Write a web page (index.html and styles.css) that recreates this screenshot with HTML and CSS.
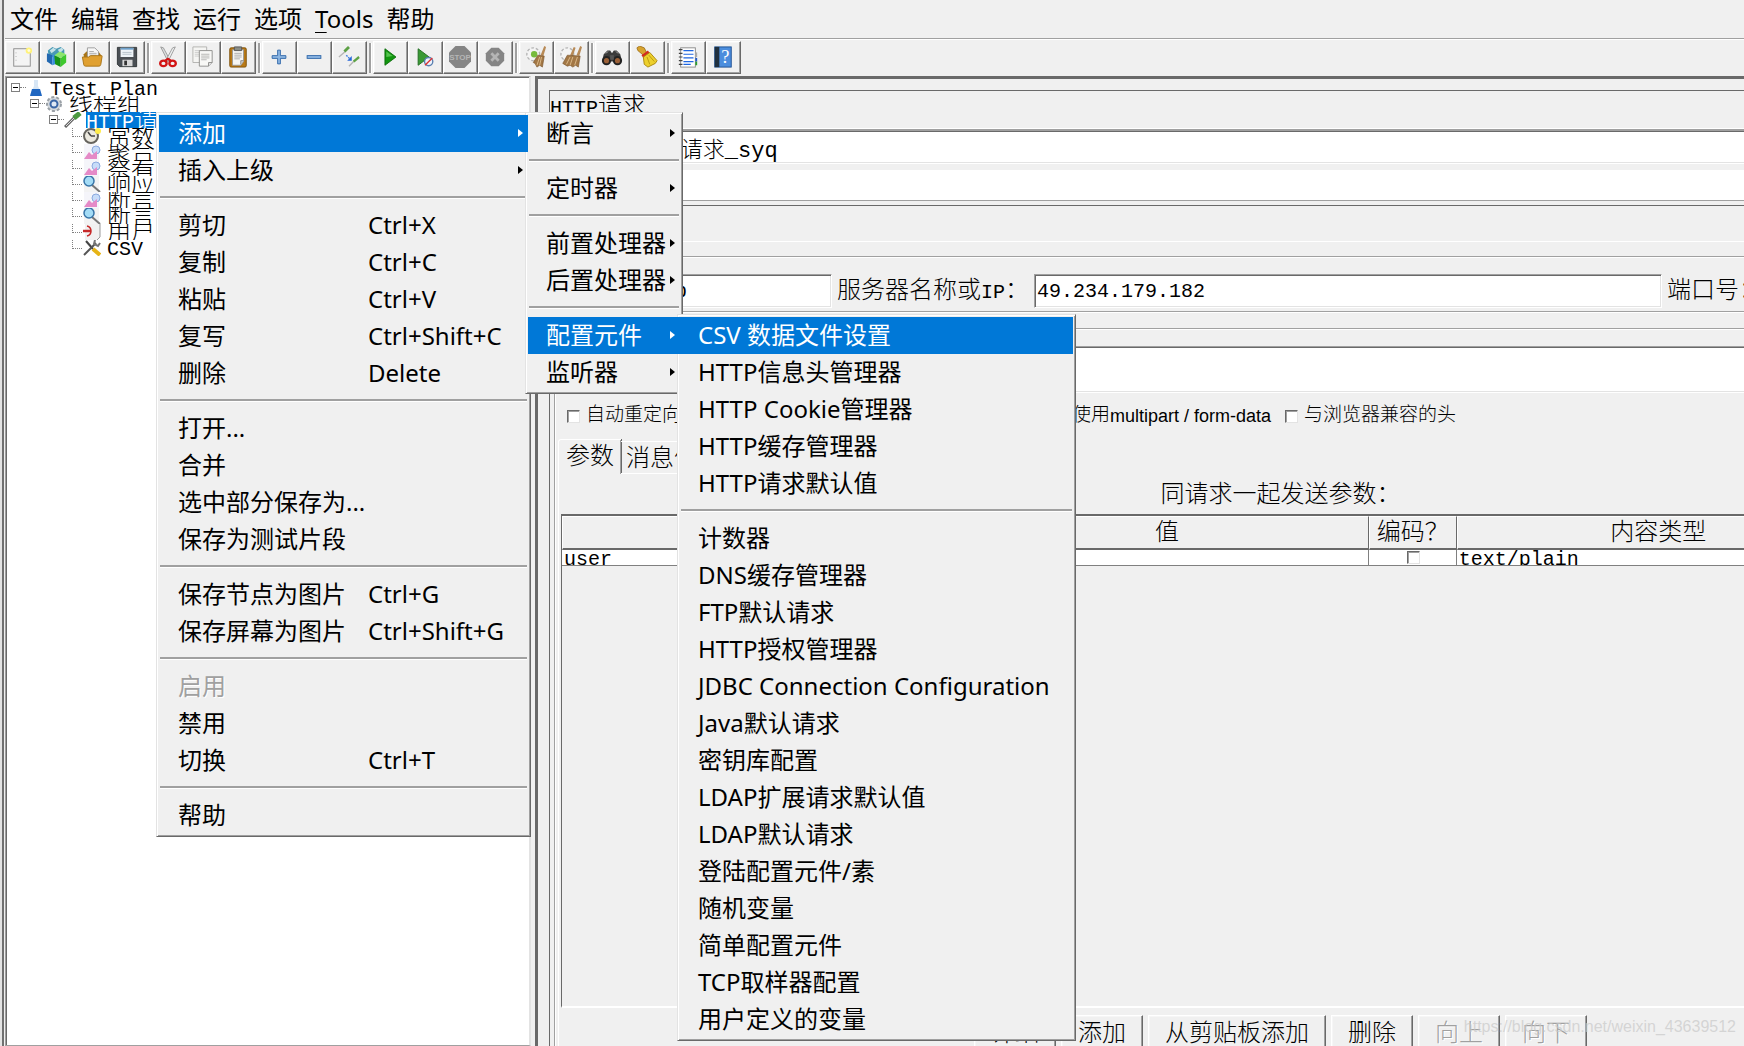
FILE: index.html
```html
<!DOCTYPE html>
<html lang="zh-CN">
<head>
<meta charset="utf-8">
<title>Test Plan</title>
<link rel="stylesheet" href="styles.css">
</head>
<body>
<div class="app">
  <nav class="menubar">
    <button type="button">文件</button>
    <button type="button">编辑</button>
    <button type="button">查找</button>
    <button type="button">运行</button>
    <button type="button">选项</button>
    <button type="button"><u>T</u>ools</button>
    <button type="button">帮助</button>
  </nav>

  <div class="toolbar">
    <div class="group">
      <button type="button" aria-label="新建"><svg viewBox="0 0 24 24"><rect x="3" y="3" width="18" height="19" fill="#f4f4f4" stroke="#8a8a8a"/><path d="M5.500 7v12" stroke="#aaa" stroke-dasharray="1 3"/><circle cx="19.500" cy="5" r="3.500" fill="#fff27a"/><circle cx="19.500" cy="5" r="1.500" fill="#fffde0"/></svg></button>
      <button type="button" aria-label="模板"><svg viewBox="0 0 24 24"><path d="M2 5l5-4 4 2 5-2 4 3v8H3z" fill="#4a9ab5"/><path d="M4 5l4-3 3 2-5 4zm9-1l4-2 2 2-4 4z" fill="#c5e2e8"/><path d="M1 8l6 2v11l-6-4z" fill="#2268b0"/><path d="M7 10l5-2v11l-5 2z" fill="#3a8ee0"/><path d="M9 10l7 3v10l-6-3z" fill="#179317"/><path d="M16 13l6-4v9l-6 5z" fill="#3fc82e"/><path d="M9 10l6-4 7 3-6 4z" fill="#8be56c"/></svg></button>
      <button type="button" aria-label="打开"><svg viewBox="0 0 24 24"><path d="M3 9l3-3h13l3 4v9H3z" fill="#a87417"/><path d="M7 2h8l4 4v9H7z" fill="#f7f7f7" stroke="#999"/><path d="M9 6h5M9 8h8M9 10h8" stroke="#aaa"/><path d="M1.500 12h7l2-1.500h12q.8 0 .5 1l-1.500 9q-.3 1.500-2 1.500H5q-1.700 0-2-1.500z" fill="#e0a030" stroke="#a87417"/></svg></button>
      <button type="button" aria-label="保存"><svg viewBox="0 0 24 24"><path d="M1.500 1.500h21v21H4l-2.500-2.500z" fill="#4a4f54" stroke="#2f3336"/><rect x="5" y="2" width="14" height="10" fill="#eef4f8"/><rect x="5" y="2" width="14" height="2" fill="#6d9fc9"/><path d="M7 7h10M7 9h10" stroke="#b5c1c9"/><rect x="7" y="15" width="11" height="7" fill="#d8d8d8"/><rect x="9" y="16" width="3" height="5" fill="#333"/></svg></button>
    </div>
    <div class="group">
      <button type="button" aria-label="剪切"><svg viewBox="0 0 24 24"><path d="M4 1l3 1 7 13-2 2z" fill="#d9dcdc" stroke="#888" stroke-width=".8"/><path d="M20 1l-3 1-7 13 2 2z" fill="#eceeee" stroke="#888" stroke-width=".8"/><ellipse cx="7" cy="19" rx="3.500" ry="3" fill="none" stroke="#d21414" stroke-width="2.600"/><ellipse cx="17" cy="19" rx="3.500" ry="3" fill="none" stroke="#d21414" stroke-width="2.600"/><path d="M9 16l3-2 3 2" stroke="#d21414" stroke-width="2.400" fill="none"/></svg></button>
      <button type="button" aria-label="复制"><svg viewBox="0 0 24 24"><path d="M1 1h15v17H1z" fill="#f5f5f3" stroke="#b0b0ae"/><path d="M3 5h5M3 7h5M3 9h5M3 11h5" stroke="#ccc"/><path d="M8 5h14v13l-4 4H8z" fill="#f8f8f6" stroke="#8c8c8a"/><path d="M10 9h9M10 11h9M10 13h9M10 15h6" stroke="#b4b4b2"/><path d="M22 18h-4v4" fill="#ddd" stroke="#8c8c8a"/></svg></button>
      <button type="button" aria-label="粘贴"><svg viewBox="0 0 24 24"><rect x="3" y="2" width="18" height="21" rx="1.500" fill="#b97a17" stroke="#7d4f08"/><path d="M6 4h12v13l-3 4H6z" fill="#f6f6f4" stroke="#999"/><path d="M8 1h8v4H8z" fill="#8a8d86" stroke="#555"/><path d="M8 8h8M8 10h8M8 12h8M8 14h6" stroke="#aaa"/><path d="M18 16h-3v4" fill="#ccc" stroke="#888"/></svg></button>
    </div>
    <div class="group">
      <button type="button" aria-label="展开"><svg viewBox="0 0 24 24"><path d="M10.500 4.500h3v6h6v3h-6v6h-3v-6h-6v-3h6z" fill="#8db7e3" stroke="#2e66a8"/></svg></button>
      <button type="button" aria-label="折叠"><svg viewBox="0 0 24 24"><rect x="4.500" y="10.500" width="15" height="3" fill="#8db7e3" stroke="#2e66a8"/></svg></button>
      <button type="button" aria-label="切换"><svg viewBox="0 0 24 24"><path d="M1 12l7-6" stroke="#b5b5b5" stroke-width="1.500"/><path d="M7 6l5-5" stroke="#5da145" stroke-width="3"/><path d="M12 22l5-5" stroke="#b5b5b5" stroke-width="1.500"/><path d="M17 17l6-5" stroke="#5da145" stroke-width="2.500"/><path d="M9 10l4 4" stroke="#3f7de0" stroke-width="1.500" stroke-dasharray="2 1"/><path d="M15 11v5h-5z" fill="#2465d8"/></svg></button>
    </div>
    <div class="group">
      <button type="button" aria-label="启动"><svg viewBox="0 0 24 24"><path d="M6.500 3l12 9-12 9z" fill="#12970f" stroke="#0b6b0b"/><path d="M8 6l7 5-7 1z" fill="#54c44e"/></svg></button>
      <button type="button" aria-label="无停顿启动"><svg viewBox="0 0 24 24"><path d="M4.500 3l12 9-12 9z" fill="#3a9a35" stroke="#226b22"/><circle cx="16" cy="17" r="4.500" fill="#eef3fb" stroke="#5a7fb0" stroke-width="1.500"/><path d="M12 21l8-8" stroke="#d33" stroke-width="1.500"/></svg></button>
      <button type="button" aria-label="停止" disabled><svg class="wide" viewBox="0 0 24 24"><path d="M7.500 1h9L23 7.500v9L16.500 23h-9L1 16.500v-9z" fill="#858585"/><text x="12" y="15" text-anchor="middle" class="stop">STOP</text></svg></button>
      <button type="button" aria-label="关闭" disabled><svg viewBox="0 0 24 24"><path d="M8 2h8l6 6v8l-6 6H8l-6-6V8z" fill="#858585"/><path d="M8 8l8 8M16 8l-8 8" stroke="#b5b5b5" stroke-width="3"/></svg></button>
    </div>
    <div class="group">
      <button type="button" aria-label="清除"><svg viewBox="0 0 24 24"><circle cx="9" cy="9" r="7" fill="#f4f4f4" stroke="#b5b5b5" stroke-width="1.500" stroke-dasharray="3 2"/><circle cx="10" cy="9" r="3.500" fill="#77bb3b"/><path d="M21 0l2 1-3 10-3-1z" fill="#b88a56"/><path d="M14 10l7 1-2 12-3-2-3 2-2-4-2-1z" fill="#a27745" stroke="#7a552c" stroke-width=".7"/><path d="M16 12l-3 9M18 12l-2 9" stroke="#dfbd8d"/></svg></button>
      <button type="button" aria-label="清除全部"><svg viewBox="0 0 24 24"><circle cx="8" cy="9" r="7" fill="#f4f4f4" stroke="#b5b5b5" stroke-width="1.500" stroke-dasharray="3 2"/><path d="M15 1l2 1-3 9-3-1zM22 0l2 1-3 10-3-1z" fill="#b88a56"/><path d="M8 10l14 1-2 12-3-2-3 2-3-2-3 1-5-3z" fill="#a27745" stroke="#7a552c" stroke-width=".7"/><path d="M11 12l-4 8M14 12l-3 9M19 12l-3 9" stroke="#dfbd8d"/></svg></button>
    </div>
    <div class="group">
      <button type="button" aria-label="查找"><svg viewBox="0 0 24 24"><path d="M3 9l4-4h3l2 3 2-3h3l4 4 2 8H1z" fill="#3b3b3b"/><path d="M5 8l3-2M19 8l-3-2" stroke="#999"/><circle cx="6" cy="16" r="5" fill="#222"/><circle cx="18" cy="16" r="5" fill="#222"/><circle cx="6" cy="16" r="2.800" fill="#9c6138"/><circle cx="18" cy="16" r="2.800" fill="#9c6138"/><rect x="10" y="10" width="4" height="5" fill="#555"/></svg></button>
      <button type="button" aria-label="重置查找"><svg viewBox="0 0 24 24"><path d="M1 2l3-2 5 2 3 6-4 2-6-5z" fill="#d7a32f" stroke="#94650f" stroke-width=".8"/><path d="M6 10l7-5 2 3-7 5z" fill="#d52b1e"/><path d="M8 12l7-5 8 9-2 3-8 4-4-3z" fill="#edd02c" stroke="#a8860b"/><path d="M12 12l3 8M14 10l6 7" stroke="#b9990f"/></svg></button>
    </div>
    <div class="group">
      <button type="button" aria-label="函数助手"><svg viewBox="0 0 24 24"><rect x="4" y="2" width="16" height="21" fill="#fff" stroke="#888"/><path d="M7 5h11M7 9h11M7 13h11M7 17h11M7 20h8" stroke="#1f66e0" stroke-width="1.300"/><path d="M2 4h4M2 8h4M2 12h4M2 16h4M2 20h4" stroke="#444" stroke-width="1.300"/><path d="M21 7v5" stroke="#aaa" stroke-width="2"/><path d="M21 13v4" stroke="#1e59c9" stroke-width="2"/><path d="M21 17v4" stroke="#2c9c2c" stroke-width="2"/></svg></button>
      <button type="button" aria-label="帮助"><svg viewBox="0 0 24 24"><rect x="3" y="1" width="18" height="22" fill="#4b8ddd" stroke="#1d4f91"/><rect x="3" y="1" width="5" height="22" fill="#20303f"/><text x="14.500" y="19" text-anchor="middle" class="mark">?</text></svg></button>
    </div>
  </div>

  <div class="body">
    <aside class="tree">
      <ul>
        <li class="lv0"><button type="button" class="fold" aria-label="折叠"></button><svg viewBox="0 0 12 16"><path d="M4 0h4v6l4 9H0l4-9z" fill="#d7e6f5"/><path d="M2 9h8l2 7H0z" fill="#1f66c1"/></svg><span class="latin">Test Plan</span></li>
        <li class="lv1"><button type="button" class="fold" aria-label="折叠"></button><svg viewBox="0 0 18 16"><circle cx="9" cy="8" r="7" fill="#d5d9dd" stroke="#9aa0a6" stroke-width="2" stroke-dasharray="3 2"/><circle cx="9" cy="8" r="3.500" fill="#dfe8f4" stroke="#3a65a5" stroke-width="2"/></svg><span>线程组</span></li>
        <li class="lv2"><button type="button" class="fold" aria-label="折叠"></button><svg viewBox="0 0 18 16"><path d="M1 15L11 5" stroke="#666" stroke-width="3"/><path d="M2 14l8-8" stroke="#ddd"/><path d="M10 6l6-5" stroke="#4d9a40" stroke-width="5"/></svg><span class="selected"><b class="latin">HTTP</b>请求_</span></li>
        <li class="lv3"><svg viewBox="0 0 18 16"><circle cx="8" cy="8" r="7" fill="#ece9df" stroke="#66645e" stroke-width="2"/><path d="M8 8L5 4M8 8h4" stroke="#444" stroke-width="1.500"/><circle cx="15" cy="3" r="3" fill="#ffec4a"/></svg><span>常数</span></li>
        <li class="lv3"><svg viewBox="0 0 18 16"><path d="M1 0v16h15V0" fill="#f5f5fa"/><circle cx="13" cy="6" r="4" fill="#c7dcf9" stroke="#8ba9df"/><path d="M1 15l5-7 3 3 5-4v8z" fill="#e58ac7"/></svg><span>聚合</span></li>
        <li class="lv3"><svg viewBox="0 0 18 16"><path d="M1 0v16h15V0" fill="#f5f5fa"/><circle cx="13" cy="6" r="4" fill="#c7dcf9" stroke="#8ba9df"/><path d="M1 15l5-7 3 3 5-4v8z" fill="#e58ac7"/></svg><span>察看</span></li>
        <li class="lv3"><svg viewBox="0 0 18 16"><path d="M1 0h15v16H1z" fill="#f3f3f3"/><path d="M9 9l8 7" stroke="#777" stroke-width="2"/><circle cx="6" cy="5" r="5" fill="#a4dcf6" stroke="#3875a8" stroke-width="1.500"/></svg><span>响应</span></li>
        <li class="lv3"><svg viewBox="0 0 18 16"><path d="M1 0v16h15V0" fill="#f5f5fa"/><circle cx="13" cy="6" r="4" fill="#c7dcf9" stroke="#8ba9df"/><path d="M1 15l5-7 3 3 5-4v8z" fill="#e58ac7"/></svg><span>断言</span></li>
        <li class="lv3"><svg viewBox="0 0 18 16"><path d="M1 0h15v16H1z" fill="#f3f3f3"/><path d="M9 9l8 7" stroke="#777" stroke-width="2"/><circle cx="6" cy="5" r="5" fill="#a4dcf6" stroke="#3875a8" stroke-width="1.500"/></svg><span>断言</span></li>
        <li class="lv3"><svg viewBox="0 0 18 16"><path d="M2 0h15v13l-3 3H2z" fill="#f1f1f1"/><path d="M17 0v13l-3 3" fill="none" stroke="#999"/><path d="M0 7h8" stroke="#c62828" stroke-width="2.500"/><path d="M4 2q4 1 4 5t-4 5" fill="none" stroke="#c62828" stroke-width="1.500"/></svg><span>用户</span></li>
        <li class="lv3"><svg viewBox="0 0 18 16"><path d="M3 1l7 8" stroke="#444" stroke-width="2"/><path d="M10 9l7 6" stroke="#e6b416" stroke-width="4"/><path d="M1 15L13 3" stroke="#555" stroke-width="2"/><path d="M12 0l-1 4 4 2 2-3" fill="none" stroke="#777" stroke-width="2"/></svg><span class="latin">CSV</span></li>
      </ul>
    </aside>

    <main class="editor">
      <div class="wide-content">
        <h1><span class="latin">HTTP</span>请求</h1>
        <div class="line name"><label for="name">名称：</label><input id="name" value="HTTP请求_syq"></div>
        <div class="line note"><label for="note">注释：</label><input id="note"></div>
        <section class="panel">
          <div class="basic">
            <div class="etched server">
              <label for="proto">协议：</label><input id="proto" class="short" value="http">
              <label for="host">服务器名称或<span class="latin">IP</span>：</label><input id="host" class="grow" value="49.234.179.182">
              <label for="port">端口号：</label><input id="port" class="port">
            </div>
            <div class="request">
              <input class="path" aria-label="路径">
              <div class="checks">
                <label><input type="checkbox">自动重定向</label>
                <label><input type="checkbox">使用<span class="arial">multipart / form-data</span></label>
                <label><input type="checkbox">与浏览器兼容的头</label>
              </div>
              <div class="tabs"><button type="button" class="active">参数</button><button type="button">消息体</button></div>
              <div class="tabpane">
                <h2>同请求一起发送参数：</h2>
                <div class="scroll">
                  <table>
                    <colgroup><col><col><col class="encode"><col><col class="equals"></colgroup>
                    <thead><tr><th></th><th>值</th><th>编码？</th><th>内容类型</th><th></th></tr></thead>
                    <tbody><tr><td><div>user</div></td><td></td><td><div><input type="checkbox" aria-label="编码"></div></td><td><div>text/plain</div></td><td></td></tr></tbody>
                  </table>
                </div>
                <div class="actions">
                  <button type="button">详细</button>
                  <button type="button">添加</button>
                  <button type="button">从剪贴板添加</button>
                  <button type="button">删除</button>
                  <button type="button" disabled>向上</button>
                  <button type="button" disabled>向下</button>
                </div>
              </div>
            </div>
          </div>
        </section>
      </div>
    </main>
  </div>
</div>

<ul class="menu context">
  <li class="open"><button type="button">添加<i></i></button>
    <ul class="menu sub types">
      <li><button type="button">断言<i></i></button></li>
      <li class="sep"></li>
      <li><button type="button">定时器<i></i></button></li>
      <li class="sep"></li>
      <li><button type="button">前置处理器<i></i></button></li>
      <li><button type="button">后置处理器<i></i></button></li>
      <li class="sep"></li>
      <li class="open"><button type="button">配置元件<i></i></button>
        <ul class="menu sub config">
          <li class="current"><button type="button">CSV 数据文件设置</button></li>
          <li><button type="button">HTTP信息头管理器</button></li>
          <li><button type="button">HTTP Cookie管理器</button></li>
          <li><button type="button">HTTP缓存管理器</button></li>
          <li><button type="button">HTTP请求默认值</button></li>
          <li class="sep"></li>
          <li><button type="button">计数器</button></li>
          <li><button type="button">DNS缓存管理器</button></li>
          <li><button type="button">FTP默认请求</button></li>
          <li><button type="button">HTTP授权管理器</button></li>
          <li><button type="button">JDBC Connection Configuration</button></li>
          <li><button type="button">Java默认请求</button></li>
          <li><button type="button">密钥库配置</button></li>
          <li><button type="button">LDAP扩展请求默认值</button></li>
          <li><button type="button">LDAP默认请求</button></li>
          <li><button type="button">登陆配置元件/素</button></li>
          <li><button type="button">随机变量</button></li>
          <li><button type="button">简单配置元件</button></li>
          <li><button type="button">TCP取样器配置</button></li>
          <li><button type="button">用户定义的变量</button></li>
        </ul>
      </li>
      <li><button type="button">监听器<i></i></button></li>
    </ul>
  </li>
  <li><button type="button">插入上级<i></i></button></li>
  <li class="sep"></li>
  <li><button type="button">剪切<kbd>Ctrl+X</kbd></button></li>
  <li><button type="button">复制<kbd>Ctrl+C</kbd></button></li>
  <li><button type="button">粘贴<kbd>Ctrl+V</kbd></button></li>
  <li><button type="button">复写<kbd>Ctrl+Shift+C</kbd></button></li>
  <li><button type="button">删除<kbd>Delete</kbd></button></li>
  <li class="sep"></li>
  <li><button type="button">打开...</button></li>
  <li><button type="button">合并</button></li>
  <li><button type="button">选中部分保存为...</button></li>
  <li><button type="button">保存为测试片段</button></li>
  <li class="sep"></li>
  <li><button type="button">保存节点为图片<kbd>Ctrl+G</kbd></button></li>
  <li><button type="button">保存屏幕为图片<kbd>Ctrl+Shift+G</kbd></button></li>
  <li class="sep"></li>
  <li><button type="button" disabled>启用</button></li>
  <li><button type="button">禁用</button></li>
  <li><button type="button">切换<kbd>Ctrl+T</kbd></button></li>
  <li class="sep"></li>
  <li><button type="button">帮助</button></li>
</ul>
<div class="watermark">https://blog.csdn.net/weixin_43639512</div>
</body>
</html>
```
FILE: styles.css
```css
:root {
  --face: #f0f0f0;
  --light: #e3e3e3;
  --shade: #a0a0a0;
  --dark: #696969;
  --pick: #0078d7;
  --ui: "Noto Sans", "Noto Sans CJK SC", sans-serif;
  --text: "Liberation Mono", "Noto Sans CJK SC", monospace;
}
* { box-sizing: border-box; }
body {
  margin: 0;
  overflow: hidden;
  background: var(--face);
  color: #000;
  font: 24px/32px var(--ui);
}
button, input { font: inherit; color: inherit; }
button { background: none; border: 0; padding: 0; }
ul { list-style: none; margin: 0; padding: 0; }
svg { display: block; flex: none; }

.app {
  height: 100vh;
  display: flex;
  flex-direction: column;
  border-left: 2px solid #e4e4e4;
  box-shadow: inset 2px 0 #707070;
  padding-left: 3px;
}

/* menu bar */
.menubar {
  display: flex;
  gap: 13px;
  height: 39px;
  padding: 2px 5px;
  border-bottom: 1px solid var(--shade);
}
.menubar u { text-decoration-thickness: 1px; text-underline-offset: 4px; }

/* tool bar */
.toolbar {
  display: flex;
  gap: 6px;
  height: 37px;
  padding-top: 1px;
  border-top: 1px solid #fff;
}
.group { display: flex; position: relative; }
.group + .group::before {
  content: "";
  position: absolute;
  left: -4px;
  top: 2px;
  width: 2px;
  height: 30px;
  background: var(--shade);
  border-right: 1px solid #fff;
}
.group button, .actions button {
  border: 1px solid #fff;
  border-right-color: var(--dark);
  border-bottom-color: var(--dark);
  box-shadow: inset -1px -1px var(--shade), inset 1px 1px #f6f6f6;
}
.group button {
  width: 35px;
  height: 33px;
  padding: 0 2px 1px 0;
  display: grid;
  place-items: center;
}
.group svg { width: 22px; height: 22px; }
.group svg.wide { width: 24px; height: 24px; }
.stop { font: bold 8px "Liberation Sans", sans-serif; fill: #b5b5b5; text-shadow: none; }
.mark { font: 20px "Liberation Serif", serif; fill: #fff; }

/* split body */
.body {
  flex: 1;
  min-height: 0;
  display: grid;
  grid-template-columns: 526px 1fr;
  column-gap: 4px;
}
.latin { font-family: var(--text); font-size: 20px; font-weight: normal; }

/* tree */
.tree {
  background: #fff;
  border: 1px solid var(--shade);
  border-right: 2px solid var(--light);
  box-shadow: inset 1px 1px var(--dark);
  padding: 3px 0 0 5px;
}
.tree li {
  display: flex;
  height: 16px;
  overflow: hidden;
  position: relative;
  font: 24px/20px var(--text);
  font-weight: 300;
}
.tree span { white-space: nowrap; height: 16px; }
.tree .latin { font-size: 20px; line-height: 20px; }
.tree svg { width: 18px; height: 16px; margin-right: 6px; }
.tree .lv0 svg { width: 12px; margin-right: 8px; }
.tree .lv2 svg { margin-right: 4px; }
.fold {
  width: 9px;
  height: 9px;
  margin: 3px 6px 0 0;
  flex: none;
  border: 1px solid #808080;
  background: linear-gradient(#000, #000) center / 5px 1px no-repeat #fff;
}
.lv0 .fold { margin-right: 10px; }
.lv1 { padding-left: 19px; }
.lv2 { padding-left: 38px; }
.lv3 { padding-left: 72px; }
.tree li::before {
  content: "";
  position: absolute;
  top: 7px;
  width: 6px;
  border-top: 1px dotted #808080;
}
.tree .lv0::before { left: 9px; }
.tree .lv1::before { left: 28px; }
.tree .lv2::before { left: 47px; }
.tree .lv3::before {
  left: 61px;
  top: -8px;
  width: 9px;
  height: 16px;
  border: 1px dotted #808080;
  border-width: 0 0 1px 1px;
}
.selected { background: var(--pick); color: #fff; padding-right: 40px; }

/* request editor */
.editor {
  min-width: 0;
  overflow: hidden;
  border-top: 3px solid var(--dark);
  border-left: 3px solid var(--dark);
  padding: 11px 0 0 11px;
  font: 24px/32px var(--text);
  font-weight: 300;
}
.wide-content {
  width: calc(100% + 256px);
  height: 100%;
  display: flex;
  flex-direction: column;
}
h1, h2 { font: inherit; margin: 0; }
h1 {
  height: 40px;
  line-height: 34px;
  border: 1px solid var(--dark);
  border-bottom: 1px solid var(--shade);
  box-shadow: 0 -1px #fff inset;
}
.line, .server, .checks { display: flex; align-items: center; }
.line label { width: 76px; flex: none; }
.editor input:not([type=checkbox]) {
  min-width: 0;
  height: 34px;
  border: 1px solid #fff;
  border-top-color: var(--shade);
  border-left-color: var(--shade);
  border-radius: 0;
  box-shadow: inset 1px 1px var(--dark), inset -1px -1px var(--light);
  background: #fff;
  padding: 0 2px;
  font-size: 20px;
}
.editor .line input { flex: 1; }
.editor .name input { font-size: 22px; }
.editor .note input {
  height: 31px;
  border: 0;
  border-bottom: 1px solid var(--shade);
  box-shadow: none;
}
.note { margin: 5px 0 4px; }
.panel {
  flex: 1;
  min-height: 0;
  display: flex;
  border: solid var(--dark);
  border-width: 1px 0 0 1px;
  padding: 35px 0 0 4px;
}
.basic {
  flex: 1;
  min-width: 0;
  display: flex;
  flex-direction: column;
  border-top: 1px solid #fff;
  border-left: 1px solid var(--shade);
  box-shadow: inset 1px 0 #fff;
  padding: 14px 0 0 3px;
}
.etched {
  border: solid var(--shade);
  border-width: 1px 0;
  box-shadow: inset 0 1px #fff, 0 1px #fff;
}
.server { height: 56px; padding: 17px 8px 3px 6px; }
.server label { flex: none; margin: 0 5px; padding-top: 2px; white-space: nowrap; }
.server label:first-child { margin: 0; }
.editor .server .short { width: 196px; flex: none; }
.editor .server .port { width: 224px; flex: none; }
.editor .server .grow { flex: 1; }
.request {
  flex: 1;
  min-height: 0;
  display: flex;
  flex-direction: column;
  margin-top: 16px;
  border-top: 1px solid var(--shade);
  box-shadow: inset 0 1px #fff;
  padding-top: 17px;
}
.editor .path:not([type=checkbox]) { height: 47px; flex: none; }
.checks { flex: none; height: 46px; padding-left: 9px; font-size: 19px; gap: 14px; }
.checks label { display: flex; align-items: center; white-space: nowrap; }
.checks label:first-child { width: 472px; }
.arial { font: 18px "Liberation Sans", sans-serif; }
input[type=checkbox] {
  appearance: none;
  width: 13px;
  height: 13px;
  margin: 0;
  background: #fff;
  border: 1px solid var(--light);
  border-top-color: var(--dark);
  border-left-color: var(--dark);
  box-shadow: inset 1px 1px var(--shade);
}
.checks input[type=checkbox] { margin-right: 6px; }
.tabs { display: flex; align-items: flex-end; height: 35px; flex: none; }
.tabs button {
  height: 33px;
  padding: 2px 5px 0;
  border: 1px solid #fff;
  border-left-width: 0;
  border-right-width: 0;
}
.tabs .active {
  height: 35px;
  padding: 2px 7px 0;
  border-width: 1px 0 0 1px;
  border-radius: 3px 0 0 0;
  box-shadow: 1px 0 var(--dark), inset -1px 0 var(--shade);
}
.tabpane {
  flex: 1;
  min-height: 0;
  display: flex;
  flex-direction: column;
  border-left: 1px solid #fff;
  padding-left: 2px;
}
.tabpane h2 { flex: none; height: 40px; padding-top: 2px; line-height: 40px; text-align: center; }
.scroll {
  flex: 1;
  min-height: 0;
  border: 1px solid var(--dark);
  border-top: 2px solid var(--dark);
  border-bottom: 2px solid #fff;
}
table { width: 100%; table-layout: fixed; border-collapse: separate; border-spacing: 0; }
.encode { width: 88px; }
.equals { width: 139px; }
th {
  height: 34px;
  padding: 2px 0 0;
  font: inherit;
  line-height: 29px;
  font-weight: 300;
  border: 1px solid #fff;
  border-right-color: var(--dark);
  border-bottom: 2px solid var(--dark);
  white-space: nowrap;
}
td {
  height: 16px;
  padding: 0;
  background: #fff;
  border-right: 1px solid #808080;
  border-bottom: 1px solid #808080;
  font-size: 20px;
  line-height: 20px;
}
td div { height: 15px; overflow: hidden; padding-left: 2px; }
td input[type=checkbox] { display: block; margin: 1px auto 0; }
.actions {
  flex: none;
  height: 38px;
  overflow: hidden;
  display: flex;
  justify-content: center;
  gap: 5px;
  padding-top: 7px;
}
.actions button {
  height: 38px;
  flex: none;
  padding: 1px 16px 0;
  line-height: 36px;
}
:disabled { color: var(--shade); text-shadow: 1px 1px #fff; }

/* pop-up menus */
.menu {
  position: absolute;
  padding: 2px;
  background: var(--face);
  border: 1px solid var(--light);
  border-right-color: var(--dark);
  border-bottom-color: var(--dark);
  box-shadow: inset 1px 1px #fff, inset -1px -1px var(--shade);
}
.context { left: 156px; top: 112px; width: 375px; }
.sub { left: calc(100% - 3px); top: -3px; z-index: 1; }
.types { width: 158px; }
.config { width: 399px; }
.menu li { position: relative; height: 37px; }
.menu li.sep { height: 18px; padding: 7px 1px; }
.sep::before {
  content: "";
  display: block;
  height: 2px;
  background: var(--shade);
  border-bottom: 1px solid #fff;
}
.menu button {
  position: relative;
  display: flex;
  align-items: center;
  width: 100%;
  height: 37px;
  padding: 0 0 2px 18px;
  white-space: nowrap;
}
.context > li > button { padding-left: 19px; }
.menu .open > button, .menu .current > button { background: var(--pick); color: #fff; }
.menu .open > button { z-index: 2; }
.menu kbd { position: absolute; left: 209px; font: inherit; }
.menu i {
  position: absolute;
  right: 5px;
  border: 4px solid transparent;
  border-left: 5px solid currentColor;
  border-right: 0;
}

.watermark {
  position: absolute;
  right: 8px;
  bottom: 6px;
  font: 16px/26px "Liberation Sans", sans-serif;
  color: rgba(200, 200, 200, .7);
  z-index: 3;
}
```
